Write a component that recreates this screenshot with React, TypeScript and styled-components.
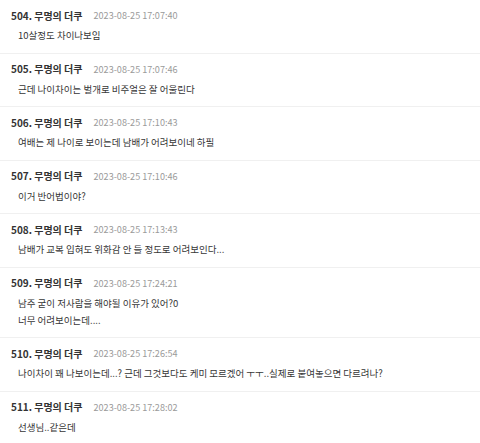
import React from "react";
import styled, { createGlobalStyle } from "styled-components";

const Global = createGlobalStyle`
  html, body { margin: 0; padding: 0; background: #fff; }
  body { font-family: "Noto Sans CJK KR", "Noto Sans", sans-serif; -webkit-font-smoothing: antialiased; }
`;

const List = styled.ul`
  list-style: none;
  margin: 0;
  padding: 0;
  width: 480px;
`;

const Item = styled.li`
  padding: 8px 0 8.5px;
  border-bottom: 1px solid #f0f0f0;
`;

const Header = styled.div`
  display: flex;
  align-items: center;
  height: 14px;
  padding-left: 11px;
  gap: 11px;
  white-space: nowrap;
`;

const Author = styled.span`
  font-size: 10px;
  font-weight: 700;
  color: #333;
`;

const DateText = styled.span`
  font-size: 9.1px;
  color: #9a9a9a;
`;

const Body = styled.div`
  margin-top: 5px;
  padding-left: 18px;
  font-size: 9.5px;
  line-height: 17px;
  color: #363636;
`;

type Comment = { no: number; date: string; lines: string[] };

const comments: Comment[] = [
  { no: 504, date: "2023-08-25 17:07:40", lines: ["10살정도 차이나보임"] },
  { no: 505, date: "2023-08-25 17:07:46", lines: ["근데 나이차이는 벌개로 비주얼은 잘 어울린다"] },
  { no: 506, date: "2023-08-25 17:10:43", lines: ["여배는 제 나이로 보이는데 남배가 어려보이네 하필"] },
  { no: 507, date: "2023-08-25 17:10:46", lines: ["이거 반어법이야?"] },
  { no: 508, date: "2023-08-25 17:13:43", lines: ["남배가 교복 입혀도 위화감 안 들 정도로 어려보인다..."] },
  { no: 509, date: "2023-08-25 17:24:21", lines: ["남주 굳이 저사람을 해야될 이유가 있어?0", "너무 어려보이는데...."] },
  { no: 510, date: "2023-08-25 17:26:54", lines: ["나이차이 꽤 나보이는데...? 근데 그것보다도 케미 모르겠어 ㅜㅜ..실제로 붙여놓으면 다르려나?"] },
  { no: 511, date: "2023-08-25 17:28:02", lines: ["선생님..같은데"] },
];

export default function App() {
  return (
    <>
      <Global />
      <List>
        {comments.map((c) => (
          <Item key={c.no}>
            <Header>
              <Author>{c.no}. 무명의 더쿠</Author>
              <DateText>{c.date}</DateText>
            </Header>
            <Body>
              {c.lines.map((l, i) => (
                <div key={i}>{l}</div>
              ))}
            </Body>
          </Item>
        ))}
      </List>
    </>
  );
}
